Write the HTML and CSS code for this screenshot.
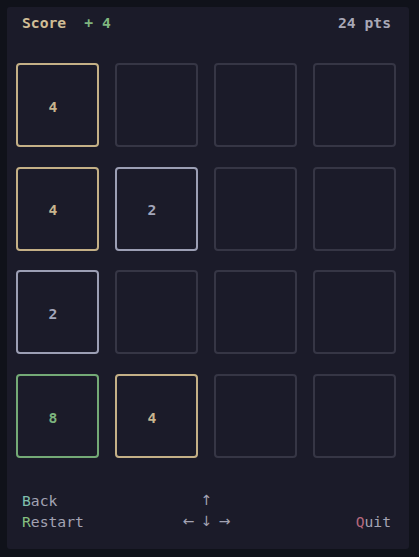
FILE: index.html
```html
<!DOCTYPE html>
<html>
<head>
<meta charset="utf-8">
<link rel="stylesheet" href="styles.css">
</head>
<body>
<div class="panel">
  <div class="header">
    <div class="left"><span class="score">Score</span><span class="delta">+ 4</span></div>
    <div class="pts">24 pts</div>
  </div>
  <div class="grid">
    <div class="tile t4">4</div><div class="tile"></div><div class="tile"></div><div class="tile"></div>
    <div class="tile t4">4</div><div class="tile t2">2</div><div class="tile"></div><div class="tile"></div>
    <div class="tile t2">2</div><div class="tile"></div><div class="tile"></div><div class="tile"></div>
    <div class="tile t8">8</div><div class="tile t4">4</div><div class="tile"></div><div class="tile"></div>
  </div>
  <div class="footer">
    <div class="keys">
      <div><span class="kb">B</span>ack</div>
      <div><span class="kr">R</span>estart</div>
    </div>
    <div class="arrows">
      <div class="arow"><span class="ar">↑</span></div>
      <div class="arow"><span class="ar">←</span><span class="ar">↓</span><span class="ar">→</span></div>
    </div>
    <div class="quit"><span class="kq">Q</span>uit</div>
  </div>
</div>
</body>
</html>
```
FILE: styles.css
```css
html, body {
  margin: 0;
  padding: 0;
  background: #10121a;
}
body {
  width: 419px;
  height: 557px;
  padding: 7px 0 0 7px;
  box-sizing: border-box;
  font-family: "DejaVu Sans Mono", "Liberation Mono", monospace;
  font-size: 14.7px;
}
.panel {
  width: 402px;
  height: 542px;
  background: #1b1b29;
  border-radius: 3px;
  box-sizing: border-box;
  padding: 6px 18px 0 9px;
}
.header {
  display: flex;
  justify-content: space-between;
  line-height: 20px;
  height: 20px;
  padding-left: 6px;
  font-weight: bold;
}
.score { color: #d0bd95; }
.delta { color: #7fb57f; margin-left: 18px; }
.pts { color: #a8a8b6; }
.grid {
  margin-top: 30px;
  display: grid;
  grid-template-columns: repeat(4, 83px);
  grid-template-rows: repeat(4, 84px);
  column-gap: 16px;
  row-gap: 19.7px;
}
.tile {
  box-sizing: border-box;
  border: 2px solid #363645;
  border-radius: 4px;
  display: flex;
  align-items: center;
  justify-content: center;
  padding-right: 9px;
  font-weight: bold;
  padding-top: 2px;
}
.t4 { border-color: #c4b086; color: #c8b58e; }
.t2 { border-color: #9c9fb4; color: #a3a6ba; }
.t8 { border-color: #74aa76; color: #7cb47e; }
.footer {
  margin-top: 32px;
  display: grid;
  grid-template-columns: 1fr auto 1fr;
  align-items: end;
  padding-left: 6px;
  line-height: 21px;
  color: #a3a3b3;
}
.arrows { text-align: center; }
.arow { display: flex; justify-content: center; height: 21px; }
.ar {
  display: inline-block;
  width: 18px;
  text-align: center;
  font-family: "DejaVu Sans", sans-serif;
  font-size: 14px;
}
.quit { text-align: right; }
.kb { color: #80bfae; }
.kr { color: #86c080; }
.kq { color: #b5677c; }
```
